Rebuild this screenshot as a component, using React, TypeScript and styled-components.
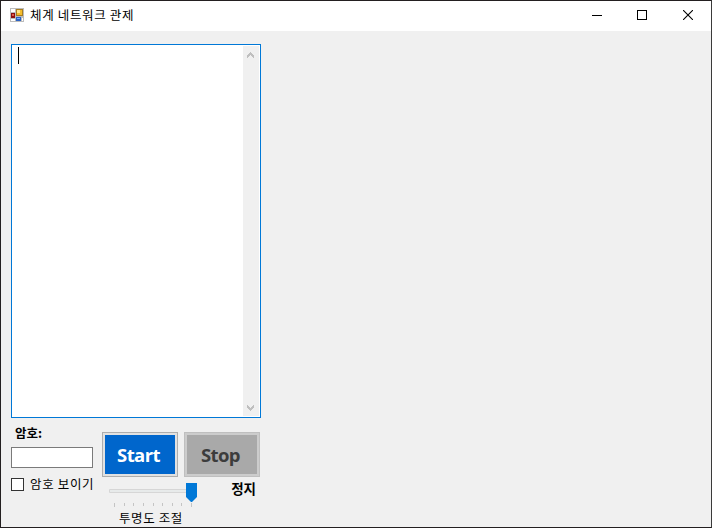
import React from "react";
import styled, { createGlobalStyle } from "styled-components";

const Global = createGlobalStyle`
  * { box-sizing: border-box; }
  body { margin: 0; background: #231f20; overflow: hidden; }
`;

const Window = styled.div`
  width: 712px;
  height: 528px;
  border: 1px solid #231f20;
  border-right-color: #3a3a3a;
  background: #f0f0f0;
  color: #000;
  font: 12.5px/16px "Noto Sans CJK KR", sans-serif;
  display: flex;
  flex-direction: column;
  overflow: hidden;
`;

const TitleBar = styled.header`
  height: 30px;
  flex: none;
  background: #fff;
  display: flex;
  align-items: center;
  padding: 0 0 2px 9px;
`;

const Title = styled.h1`
  margin: 0 auto 0 6px;
  font-size: 12.5px;
  line-height: 16px;
  font-weight: 400;
  letter-spacing: 0.65px;
`;

const CaptionButton = styled.button`
  width: 46px;
  height: 28px;
  padding: 0;
  border: 0;
  background: transparent;
  display: flex;
  align-items: center;
  justify-content: center;
`;

const Client = styled.main`
  width: 260px;
  padding: 13px 0 0 10px;
`;

const LogBox = styled.div`
  width: 250px;
  height: 374px;
  border: 1px solid #0078d7;
  background: #fff;
  display: flex;
  justify-content: space-between;
  padding: 1px;
`;

const Caret = styled.div`
  width: 1px;
  height: 17px;
  margin: 1px 0 0 5px;
  background: #000;
`;

const ScrollBar = styled.div`
  width: 16px;
  background: #f0f0f0;
  display: flex;
  flex-direction: column;
  justify-content: space-between;
  align-items: center;
  padding: 6px 0 5px;
`;

const Controls = styled.section`
  display: grid;
  grid-template-columns: 91px 159px;
  height: 109px;
`;

const PasswordPane = styled.div`
  padding-top: 7px;
`;

const PasswordLabel = styled.label`
  display: block;
  height: 16px;
  margin-left: 4px;
  font-weight: 700;
  white-space: nowrap;
`;

const PasswordInput = styled.input`
  display: block;
  width: 82px;
  height: 21px;
  margin: 6px 0 8px;
  padding: 2px;
  border: 1px solid #7a7a7a;
  border-radius: 0;
  background: #fff;
  outline: none;
`;

const CheckRow = styled.label`
  display: flex;
  align-items: center;
  height: 16px;
  white-space: nowrap;
  letter-spacing: 0.65px;
`;

const CheckBox = styled.input`
  appearance: none;
  flex: none;
  width: 13px;
  height: 13px;
  margin: 0 6px 0 0;
  border: 1px solid #333;
  background: #fff;
`;

const ActionPane = styled.div`
  padding-top: 14px;
`;

const ButtonRow = styled.div`
  display: flex;
  gap: 6px;
`;

const ActionButton = styled.button<{ $off?: boolean }>`
  width: 76px;
  height: 45px;
  padding: 2px;
  border: 1px solid ${(p) => (p.$off ? "#bfbfbf" : "#adadad")};
  background: ${(p) => (p.$off ? "#cccccc" : "#e1e1e1")};
  color: ${(p) => (p.$off ? "#3c3c3c" : "#fff")};
  font: 700 18.5px/39px "Open Sans", "Noto Sans", sans-serif;
  letter-spacing: -0.6px;
`;

const ButtonFace = styled.span<{ $off?: boolean }>`
  display: block;
  height: 39px;
  padding-right: 3px;
  background: ${(p) => (p.$off ? "#a9a9a9" : "#0066cc")};
`;

const StatusRow = styled.div`
  display: flex;
  justify-content: space-between;
  padding-right: 5px;
`;

const Slider = styled.div`
  width: 97px;
  display: flex;
  flex-direction: column;
  padding: 6px 0 0 7px;
`;

const SliderLabel = styled.span`
  margin: 3px 0 0 10px;
  white-space: nowrap;
  letter-spacing: 0.6px;
`;

const Status = styled.strong`
  margin-top: 3px;
  font-size: 13.5px;
  line-height: 16px;
`;

const ticks = [5, 15, 24, 34, 44, 53, 63, 72, 82];

const AppIcon = () => (
  <svg width="14" height="14" shapeRendering="crispEdges">
    <path fill="#bcbcbc" d="M0 0h14v14H0z" />
    <path fill="#fff" d="M1 1h4v3H1zM1 11h4v2H1zM12 10h1v3h-1z" />
    <path fill="#a87d20" d="M6 1h7v7H6z" />
    <path fill="#f5bd2c" d="M7 2h5v5H7z" />
    <path fill="#ffe58a" d="M7 2h3v3H7z" />
    <path fill="#8c1010" d="M1 5h4v5H1z" />
    <path fill="#e05a4a" d="M2 6h2v2H2z" />
    <path fill="#2b62c4" d="M6 9h5v4H6z" />
    <path fill="#7db0f8" d="M7 10h3v1H7z" />
  </svg>
);

const Chevron = ({ down }: { down?: boolean }) => (
  <svg width="8" height="6" shapeRendering="crispEdges">
    <path
      fill="#bfbfbf"
      transform={down ? "matrix(1 0 0 -1 0 6)" : undefined}
      d="M3 0h1v1h1v1h1v1h1v3h-1v-1h-1v-1h-1v-1h-1v1h-1v1h-1v1h-1v-3h1v-1h1v-1h1z"
    />
  </svg>
);

export default function App() {
  return (
    <Window>
      <Global />
      <TitleBar>
        <AppIcon />
        <Title>체계 네트워크 관제</Title>
        <CaptionButton aria-label="최소화">
          <svg width="12" height="10" shapeRendering="crispEdges"><path d="M2 5h10v1H2z" /></svg>
        </CaptionButton>
        <CaptionButton aria-label="최대화">
          <svg width="10" height="10" shapeRendering="crispEdges"><path d="M.5.5h9v9h-9z" fill="none" stroke="#000" /></svg>
        </CaptionButton>
        <CaptionButton aria-label="닫기">
          <svg width="10" height="10"><path d="M0 0l10 10M10 0L0 10" stroke="#000" strokeWidth="1.1" /></svg>
        </CaptionButton>
      </TitleBar>
      <Client>
        <LogBox>
          <Caret />
          <ScrollBar>
            <Chevron />
            <Chevron down />
          </ScrollBar>
        </LogBox>
        <Controls>
          <PasswordPane>
            <PasswordLabel htmlFor="password">암호:</PasswordLabel>
            <PasswordInput id="password" type="password" />
            <CheckRow>
              <CheckBox type="checkbox" />
              암호 보이기
            </CheckRow>
          </PasswordPane>
          <ActionPane>
            <ButtonRow>
              <ActionButton><ButtonFace>Start</ButtonFace></ActionButton>
              <ActionButton $off disabled><ButtonFace $off>Stop</ButtonFace></ActionButton>
            </ButtonRow>
            <StatusRow>
              <Slider>
                <svg width="90" height="24">
                  <path d="M.5 6.5h84v3h-84z" fill="#e7eaea" stroke="#d6d6d6" />
                  <path d="M77 0h11v14l-5 5h-1l-5-5z" fill="#0078d7" />
                  {ticks.map((x) => (
                    <rect key={x} x={x} y="20" width="1" height={x === 5 || x === 82 ? 4 : 3} fill="#c4c4c4" />
                  ))}
                </svg>
                <SliderLabel>투명도 조절</SliderLabel>
              </Slider>
              <Status>정지</Status>
            </StatusRow>
          </ActionPane>
        </Controls>
      </Client>
    </Window>
  );
}
